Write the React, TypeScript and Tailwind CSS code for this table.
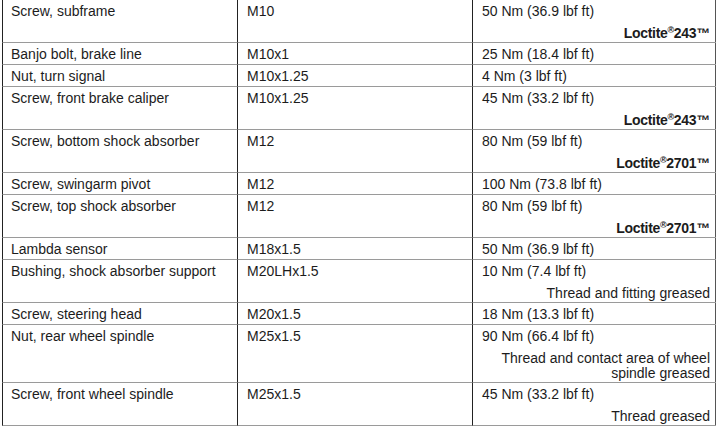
import React from "react";

type Row = {
  part: string;
  thread: string;
  torque: string;
  note?: React.ReactNode;
};

const Loctite = ({ n }: { n: string }) => (
  <span className="font-bold tracking-[-0.3px] [font-stretch:condensed] [font-family:'Liberation_Sans_Narrow','Liberation_Sans',Arial,sans-serif]">
    Loctite<span className="relative -top-[5px] text-[9px] leading-[0]">®</span>
    {n}™
  </span>
);

const rows: Row[] = [
  { part: "Screw, subframe", thread: "M10", torque: "50 Nm (36.9 lbf ft)", note: <Loctite n="243" /> },
  { part: "Banjo bolt, brake line", thread: "M10x1", torque: "25 Nm (18.4 lbf ft)" },
  { part: "Nut, turn signal", thread: "M10x1.25", torque: "4 Nm (3 lbf ft)" },
  { part: "Screw, front brake caliper", thread: "M10x1.25", torque: "45 Nm (33.2 lbf ft)", note: <Loctite n="243" /> },
  { part: "Screw, bottom shock absorber", thread: "M12", torque: "80 Nm (59 lbf ft)", note: <Loctite n="2701" /> },
  { part: "Screw, swingarm pivot", thread: "M12", torque: "100 Nm (73.8 lbf ft)" },
  { part: "Screw, top shock absorber", thread: "M12", torque: "80 Nm (59 lbf ft)", note: <Loctite n="2701" /> },
  { part: "Lambda sensor", thread: "M18x1.5", torque: "50 Nm (36.9 lbf ft)" },
  { part: "Bushing, shock absorber support", thread: "M20LHx1.5", torque: "10 Nm (7.4 lbf ft)", note: "Thread and fitting greased" },
  { part: "Screw, steering head", thread: "M20x1.5", torque: "18 Nm (13.3 lbf ft)" },
  { part: "Nut, rear wheel spindle", thread: "M25x1.5", torque: "90 Nm (66.4 lbf ft)", note: "Thread and contact area of wheel spindle greased" },
  { part: "Screw, front wheel spindle", thread: "M25x1.5", torque: "45 Nm (33.2 lbf ft)", note: "Thread greased" },
];

const cell = "border-l border-l-[#222] border-b border-b-[#9a9a9a] h-full pt-[3px] pb-[1px] leading-[17px]";

export default function App() {
  return (
    <div className="w-[717px] h-[430px] overflow-hidden bg-white pl-[2px] text-[14px] text-[#1c1c1c] [font-family:'Liberation_Sans',Arial,sans-serif]">
      <div className="grid w-[714px] grid-cols-[235px_235px_244px] border-r border-r-[#555]">
        {rows.map((r) => (
          <React.Fragment key={r.part + r.torque}>
            <div className={`${cell} pl-[8px]`}>{r.part}</div>
            <div className={`${cell} pl-[9px]`}>{r.thread}</div>
            <div className={`${cell} pl-[9px] pr-[6px]`}>
              <div className="h-[17px]">{r.torque}</div>
              {r.note && (
                <div className="mt-[6px] text-right leading-[15px]">{r.note}</div>
              )}
            </div>
          </React.Fragment>
        ))}
      </div>
    </div>
  );
}
